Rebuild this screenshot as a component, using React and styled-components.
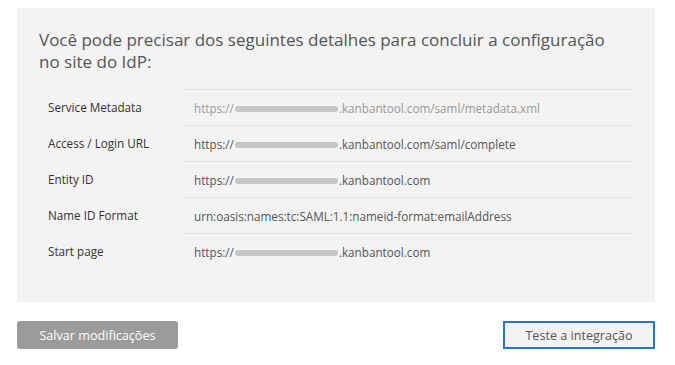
import React from "react";
import styled, { createGlobalStyle } from "styled-components";

const Global = createGlobalStyle`
  html, body { margin: 0; padding: 0; background: #fff; }
  body { font-family: "Open Sans", "Noto Sans", sans-serif; }
`;

const Page = styled.div`
  padding: 8px 20px 0 17px;
`;

const Panel = styled.section`
  background: #f3f3f3;
  padding: 21px 23px 33px 22px;
`;

const Title = styled.h2`
  margin: 0 0 16px 0;
  font-size: 17px;
  line-height: 22px;
  font-weight: 400;
  color: #555;
  max-width: 590px;
`;

const Table = styled.div`
  display: grid;
  grid-template-columns: 145px 1fr;
`;

const Label = styled.div`
  height: 36px;
  display: flex;
  align-items: center;
  padding-left: 9px;
  font-size: 11.7px;
  color: #333;
`;

const Value = styled.div`
  height: 36px;
  box-sizing: border-box;
  border-top: 1px solid #e0e0e0;
  display: flex;
  align-items: center;
  padding-left: 10px;
  font-size: 11.7px;
  color: ${(p) => (p.$muted ? "#999" : "#555")};
  white-space: nowrap;
`;

const Blur = styled.span`
  display: inline-block;
  width: 103px;
  height: 6px;
  border-radius: 3px;
  background: #c6c6c6;
  margin: 0 1px 0 1px;
  position: relative;
  top: 1px;
`;

const Actions = styled.div`
  display: flex;
  justify-content: space-between;
  margin-top: 19px;
`;

const SaveButton = styled.button`
  width: 161px;
  height: 28px;
  border: none;
  border-radius: 3px;
  background: #9b9b9b;
  color: #fff;
  font-family: "Open Sans", sans-serif;
  font-size: 12.6px;
  padding: 0;
`;

const TestButton = styled.button`
  width: 152px;
  height: 28px;
  box-sizing: border-box;
  border: 2px solid #2874c4;
  border-radius: 0;
  background: #f3f3f3;
  color: #555;
  font-family: "Open Sans", sans-serif;
  font-size: 12.6px;
  padding: 0;
`;

const rows = [
  { label: "Service Metadata", blur: true, rest: ".kanbantool.com/saml/metadata.xml", muted: true },
  { label: "Access / Login URL", blur: true, rest: ".kanbantool.com/saml/complete" },
  { label: "Entity ID", blur: true, rest: ".kanbantool.com" },
  { label: "Name ID Format", text: "urn:oasis:names:tc:SAML:1.1:nameid-format:emailAddress" },
  { label: "Start page", blur: true, rest: ".kanbantool.com" },
];

export default function App() {
  return (
    <>
      <Global />
      <Page>
        <Panel>
          <Title>
            Você pode precisar dos seguintes detalhes para concluir a configuração no site do IdP:
          </Title>
          <Table>
            {rows.map((r) => (
              <React.Fragment key={r.label}>
                <Label>{r.label}</Label>
                <Value $muted={r.muted}>
                  {r.blur ? (
                    <>
                      https://
                      <Blur />
                      {r.rest}
                    </>
                  ) : (
                    r.text
                  )}
                </Value>
              </React.Fragment>
            ))}
          </Table>
        </Panel>
        <Actions>
          <SaveButton>Salvar modificações</SaveButton>
          <TestButton>Teste a integração</TestButton>
        </Actions>
      </Page>
    </>
  );
}
